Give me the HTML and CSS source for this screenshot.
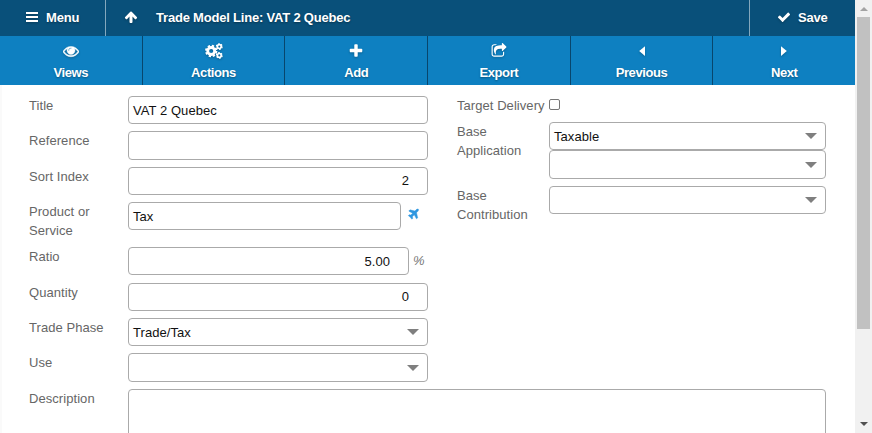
FILE: index.html
```html
<!DOCTYPE html>
<html lang="en">
<head>
<meta charset="utf-8">
<title>Trade Model Line: VAT 2 Quebec</title>
<link rel="stylesheet" href="styles.css">
</head>
<body>
<main class="page">
  <header class="topbar">
    <a class="menu"><svg class="icon" viewBox="0 0 14 14"><path d="M1 2h12v2H1zM1 6h12v2H1zM1 10h12v2H1z"/></svg><span>Menu</span></a>
    <div class="heading"><svg class="icon" viewBox="0 0 1792 1792"><path d="M1675 971q0 51-37 90l-75 75q-38 38-91 38-54 0-90-38l-294-293v704q0 52-37.5 84.5t-90.5 32.5h-128q-53 0-90.5-32.5t-37.5-84.5v-704l-294 293q-36 38-90 38t-90-38l-75-75q-38-38-38-90 0-53 38-91l651-651q35-37 90-37 54 0 91 37l651 651q37 39 37 91z"/></svg><span>Trade Model Line: VAT 2 Quebec</span></div>
    <a class="save"><svg class="icon" viewBox="0 0 1792 1792"><path d="M1671 566q0 40-28 68l-724 724-136 136q-28 28-68 28t-68-28l-136-136-362-362q-28-28-28-68t28-68l136-136q28-28 68-28t68 28l294 295 656-657q28-28 68-28t68 28l136 136q28 28 28 68z"/></svg><span>Save</span></a>
  </header>
  <nav class="actions">
    <a><svg class="icon eye" viewBox="0 0 1792 1792"><path d="M1664 960q-152-236-381-353 61 104 61 225 0 185-131.5 316.5t-316.5 131.5-316.5-131.5-131.5-316.5q0-121 61-225-229 117-381 353 133 205 333.5 326.5t434.5 121.5 434.5-121.5 333.5-326.5zm-720-384q0-20-14-34t-34-14q-125 0-214.5 89.5t-89.5 214.5q0 20 14 34t34 14 34-14 14-34q0-86 61-147t147-61q20 0 34-14t14-34zm848 384q0 34-20 69-140 230-376.5 368.5t-499.5 138.5-499.5-139-376.5-368q-20-35-20-69t20-69q140-229 376.5-368t499.5-139 499.5 139 376.5 368q20 35 20 69z"/></svg><span>Views</span></a>
    <a><svg class="icon gears" viewBox="0 0 18 16"><g fill="none" stroke="currentColor"><circle cx="6.2" cy="8" r="3.5" stroke-width="2.8"/><circle cx="6.2" cy="8" r="5.2" stroke-width="2" stroke-dasharray="2.3 1.784"/><circle cx="14.3" cy="3.6" r="1.9" stroke-width="1.7"/><circle cx="14.3" cy="3.6" r="2.9" stroke-width="1.1" stroke-dasharray="1.6 1.437"/><circle cx="14.3" cy="12.4" r="1.9" stroke-width="1.7"/><circle cx="14.3" cy="12.4" r="2.9" stroke-width="1.1" stroke-dasharray="1.6 1.437"/></g></svg><span>Actions</span></a>
    <a><svg class="icon" viewBox="0 0 1792 1792"><path d="M1600 736v192q0 40-28 68t-68 28h-416v416q0 40-28 68t-68 28h-192q-40 0-68-28t-28-68v-416h-416q-40 0-68-28t-28-68v-192q0-40 28-68t68-28h416v-416q0-40 28-68t68-28h192q40 0 68 28t28 68v416h416q40 0 68 28t28 68z"/></svg><span>Add</span></a>
    <a><svg class="icon" viewBox="0 0 1792 1792"><path d="M1472 989v259q0 119-84.5 203.5t-203.5 84.5h-832q-119 0-203.5-84.5t-84.5-203.5v-832q0-119 84.5-203.5t203.5-84.5h255q13 0 22.5 9.5t9.5 22.5q0 27-26 32-77 26-133 60-10 4-16 4h-112q-66 0-113 47t-47 113v832q0 66 47 113t113 47h832q66 0 113-47t47-113v-214q0-19 18-29 28-13 54-37 16-16 35-8 21 9 21 29zm237-496l-384 384q-18 19-45 19-12 0-25-5-39-17-39-59v-192h-160q-323 0-438 131-119 137-74 473 3 23-20 34-8 2-12 2-16 0-26-13-10-14-21-31t-39.5-68.5-49.5-99.5-38.5-114-17.5-122q0-49 3.5-91t14-90 28-88 47-81.5 68.5-74 94.5-61.5 124.5-48.5 159.5-30.5 196.5-11h160v-192q0-42 39-59 13-5 25-5 26 0 45 19l384 384q19 19 19 45t-19 45z"/></svg><span>Export</span></a>
    <a><svg class="icon" viewBox="0 0 16 16"><path d="M11 3.2v9.8L5.2 8.1z"/></svg><span>Previous</span></a>
    <a><svg class="icon" viewBox="0 0 16 16"><path d="M5 3.2v9.8L10.8 8.1z"/></svg><span>Next</span></a>
  </nav>
  <form class="form">
    <section class="column left">
      <label>Title</label><div class="field">VAT 2 Quebec</div>
      <label>Reference</label><div class="field tall"></div>
      <label>Sort Index</label><div class="field number raised">2</div>
      <label>Product or Service</label><div class="with-addon"><div class="field">Tax</div><svg class="plane" viewBox="0 0 1792 1792"><path d="M1568 160q44 52 12 148t-108 172l-161 161 160 696q5 19-12 33l-128 96q-7 6-19 6-4 0-7-1-15-3-21-16l-279-508-259 259 53 194q5 17-8 31l-96 96q-9 9-23 9h-2q-15-2-24-13l-189-252-252-189q-11-7-13-23-1-13 9-25l96-97q9-9 23-9 6 0 8 1l194 53 259-259-508-279q-14-8-17-24-2-16 9-27l128-128q14-13 30-8l665 159 160-160q76-76 172-108t148 12z"/></svg></div>
      <label>Ratio</label><div class="with-addon"><div class="field number">5.00</div><em class="percent">%</em></div>
      <label>Quantity</label><div class="field number raised">0</div>
      <label>Trade Phase</label><div class="field select">Trade/Tax</div>
      <label>Use</label><div class="field select tall"></div>
    </section>
    <section class="column right">
      <label>Target Delivery</label><span class="checkbox"></span>
      <label>Base Application</label><div><div class="field select">Taxable</div><div class="field select tall"></div></div>
      <label>Base Contribution</label><div class="field select"></div>
    </section>
    <label class="description-label">Description</label>
    <div class="description"></div>
  </form>
</main>
<aside class="scrollbar"><i class="up"></i><i class="thumb"></i><i class="down"></i></aside>
</body>
</html>
```
FILE: styles.css
```css
* { box-sizing: border-box; }
body {
  margin: 0;
  height: 433px;
  overflow: hidden;
  display: flex;
  background: #fff;
  color: #666;
  font: 13px/19px "Liberation Sans", Arial, sans-serif;
  letter-spacing: .06px;
}
.page { width: 855px; height: 433px; overflow: hidden; }
.topbar, .actions {
  display: flex;
  color: #fff;
  font-weight: bold;
  letter-spacing: -.2px;
  text-shadow: 0 1px 2px rgba(0, 0, 0, .35);
}
.topbar { height: 36px; background: #09507a; }
.icon { width: 14px; height: 14px; fill: currentColor; filter: drop-shadow(0 1px 1px rgba(0, 0, 0, .25)); }
.menu, .heading, .save { display: flex; align-items: center; height: 36px; padding-bottom: 2px; }
.menu { width: 106px; padding-left: 25px; gap: 7px; border-right: 1px solid #84a8bd; }
.heading { flex: 1; padding-left: 18px; gap: 18px; }
.save { width: 106px; padding-left: 27px; gap: 7px; border-left: 1px solid #84a8bd; }
.actions { height: 49px; background: #0e80c1; letter-spacing: -.4px; }
.actions a {
  flex: 1;
  display: flex;
  flex-direction: column;
  align-items: center;
  padding-top: 7px;
  gap: 4px;
}
.actions a + a { border-left: 1px solid #08466d; }
.actions .icon { width: 16px; height: 16px; }
.actions .gears { width: 18px; }
.eye { stroke: currentColor; stroke-width: 50; }
.form {
  height: 348px;
  padding: 11px 29px 0 27px;
  display: grid;
  grid-template-columns: 399px 369px;
  grid-template-rows: 293px 60px;
  column-gap: 29px;
  border-left: 2px solid #fafafa;
}
.column { display: grid; align-items: start; align-content: start; }
.left { grid-template-columns: 99px 300px; grid-template-rows: 35px 36px 35px 45px 36px 35px 35px 36px; }
.right { grid-template-columns: 92px 277px; grid-template-rows: 26px 64px 40px; }
.column label { padding-right: 8px; }
.right label:first-child { white-space: nowrap; padding: 0; }
.field {
  height: 28px;
  padding: 0 4px;
  border: 1px solid #aaa;
  border-radius: 4px;
  color: #111;
  line-height: 27px;
}
.tall { height: 29px; }
.number { text-align: right; padding-right: 18px; }
.raised { line-height: 25px; }
.select { display: flex; justify-content: space-between; align-items: center; padding-right: 8px; }
.select::after {
  content: "";
  margin-left: auto;
  border: 6px solid transparent;
  border-top-color: #7f7f7f;
  border-bottom: 0;
}
.with-addon { display: flex; }
.with-addon .field { width: 273px; }
.with-addon .number { width: 281px; }
.plane { width: 13px; height: 13px; margin: 6px 0 0 6px; fill: #2f97e0; stroke: #2f97e0; stroke-width: 60; }
.percent { margin: 4px 0 0 4px; letter-spacing: -.5px; color: #777; }
.checkbox { width: 11px; height: 11px; margin-top: 3px; border: 1px solid #767676; border-radius: 2px; }
.description-label { grid-column: 1; grid-row: 2; }
.description {
  grid-column: 1 / 3;
  grid-row: 2;
  margin-left: 99px;
  height: 60px;
  border: 1px solid #aaa;
  border-radius: 4px;
}
.scrollbar {
  width: 17px;
  height: 433px;
  display: flex;
  flex-direction: column;
  align-items: center;
  background: #f1f1f1;
}
.up { margin: 7px 0 6px; border: 4px solid transparent; border-top: 0; border-bottom-color: #a3a3a3; }
.thumb { width: 13px; height: 312px; background: #c1c1c1; }
.down { margin-top: 93px; border: 4px solid transparent; border-bottom: 0; border-top-color: #505050; }
```
